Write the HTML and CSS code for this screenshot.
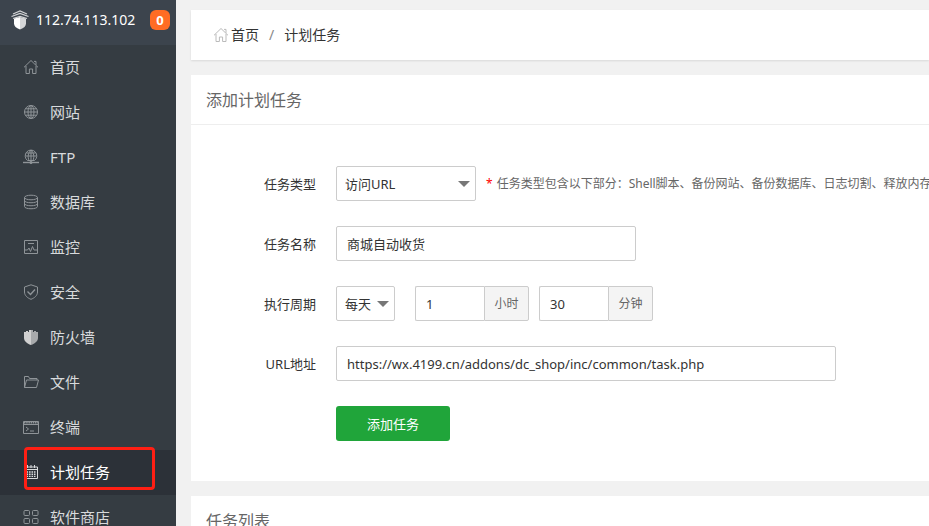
FILE: index.html
```html
<!DOCTYPE html>
<html lang="zh-CN">
<head>
<meta charset="utf-8">
<title>计划任务</title>
<link rel="stylesheet" href="styles.css">
</head>
<body>
<svg class="sprite" aria-hidden="true">
  <symbol id="home" viewBox="0 0 16 16"><path d="M1 8.3 8 1.5l7 6.8M3 7v7.5h3.4V10h3.2v4.5H13V7M11 2.4h2v3.5" /></symbol>
</svg>
<div class="app">
  <aside class="sidebar">
    <header class="host">
      <svg class="host-logo" viewBox="0 0 20 20" aria-hidden="true">
        <path d="M4 8.500 10 7v12.500C6 18 4 16 4 13.500z" fill="#fff"/>
        <path d="M16 8.500 10 7v12.500c4-1.500 6-3.500 6-6z" fill="#d4d6d8"/>
        <path d="M3 4 10 1l7 3M1.500 6.500l8.500-3 8.500 3M3 8.500l7-2 7 2" fill="none" stroke="#d0d2d4" stroke-width="1.300"/>
      </svg>
      <span class="host-ip">112.74.113.102</span>
      <span class="badge">0</span>
    </header>
    <nav>
      <ul class="menu">
        <li><a href="#"><svg class="icon" viewBox="0 0 16 16"><use href="#home"/></svg>首页</a></li>
        <li><a href="#"><svg class="icon" viewBox="0 0 16 16"><circle cx="8" cy="8" r="6.500"/><ellipse cx="8" cy="8" rx="3" ry="6.500"/><path d="M8 1.500v13M1.500 8h13M2.500 4.800h11M2.500 11.200h11"/></svg>网站</a></li>
        <li><a href="#"><svg class="icon" viewBox="0 0 16 16"><path d="M4.500 11.500a5.800 5.800 0 1 1 7 0zM8 1v10.500M2.500 7h11M3.500 4h9M6 11.500C4.500 8 5 4 8 1c3 3 3.500 7 2 10.500"/><path d="M0 13.500h16" stroke-width="1.400"/><circle cx="8" cy="13.500" r="1.200"/></svg>FTP</a></li>
        <li><a href="#"><svg class="icon" viewBox="0 0 16 16"><ellipse cx="8" cy="3.500" rx="6.500" ry="2.300"/><path d="M1.500 3.500v9c0 3 13 3 13 0v-9M1.500 6.500c0 3 13 3 13 0M1.500 9.500c0 3 13 3 13 0"/></svg>数据库</a></li>
        <li><a href="#"><svg class="icon" viewBox="0 0 16 16"><path d="M1.500 1.500h13v13h-13zM1.500 11h3l1.500-2 1.500 3.500 2-5 1.500 3.500h3.500M5 4.500h6"/></svg>监控</a></li>
        <li><a href="#"><svg class="icon" viewBox="0 0 16 16"><path d="M8 .8 14.500 3v5c0 3.500-3 6-6.500 7.300C4.500 14 1.500 11.500 1.500 8V3z"/><path d="m4.500 7.500 3 3 4.500-5" stroke-width="1.400"/></svg>安全</a></li>
        <li><a href="#"><svg class="icon" viewBox="0 0 16 16"><path class="solid-left" d="M1 3h2V2h2v1h1V1h2v15c-4-1.500-7-4-7-7z"/><path class="solid-right" d="M15 3h-2V2h-2v1h-1V1H8v15c4-1.500 7-4 7-7z"/></svg>防火墙</a></li>
        <li><a href="#"><svg class="icon" viewBox="0 0 16 16"><path d="M1.500 13.500v-11h4l1 2h7.500V6M1.500 13.500 3.500 6h12L13.500 13.500z"/></svg>文件</a></li>
        <li><a href="#"><svg class="icon" viewBox="0 0 16 16"><path d="M.5 2.500h15v12H.5zM.5 5.500h15M3 8l2.500 2L3 12M7 12h4"/><path d="M1 3.800h14" stroke-width="1.500" stroke-dasharray="1.500 .7"/></svg>终端</a></li>
        <li class="active"><a href="#"><svg class="icon" viewBox="0 0 16 16"><path d="M1.500 3h13v11.500h-13zM1.500 5.500h13M4.500 1v3M8 1v3M11.500 1v3"/><path d="M3.500 8h9M3.500 10.200h9M3.500 12.400h9" stroke-width="1.400" stroke-dasharray="1.600 .9"/></svg>计划任务</a><span class="marker"></span></li>
        <li><a href="#"><svg class="icon" viewBox="0 0 16 16"><rect x="1" y="1.500" width="5.500" height="5" rx="1"/><rect x="9.500" y="1.500" width="5.500" height="5" rx="1"/><rect x="1" y="9.500" width="5.500" height="5" rx="1"/><rect x="9.500" y="9.500" width="5.500" height="5" rx="1"/></svg>软件商店</a></li>
      </ul>
    </nav>
  </aside>
  <main class="main">
    <nav class="card crumbs">
      <a href="#"><svg class="icon" viewBox="0 0 16 16"><use href="#home"/></svg>首页</a>
      <span class="slash">/</span>
      <a href="#">计划任务</a>
    </nav>
    <section class="card">
      <h2 class="card-title">添加计划任务</h2>
      <form class="form">
        <div class="row">
          <label for="type">任务类型</label>
          <div class="fields">
            <span class="select select-wide"><select id="type"><option>访问URL</option></select></span>
            <p class="hint"><span class="star">*</span>任务类型包含以下部分：Shell脚本、备份网站、备份数据库、日志切割、释放内存</p>
          </div>
        </div>
        <div class="row">
          <label for="name">任务名称</label>
          <div class="fields"><input class="name" id="name" type="text" value="商城自动收货"></div>
        </div>
        <div class="row">
          <label for="cycle">执行周期</label>
          <div class="fields cycle">
            <span class="select"><select id="cycle"><option>每天</option></select></span>
            <span class="group"><input id="hour" type="text" value="1"><label class="unit" for="hour">小时</label></span>
            <span class="group"><input id="minute" type="text" value="30"><label class="unit" for="minute">分钟</label></span>
          </div>
        </div>
        <div class="row">
          <label for="url">URL地址</label>
          <div class="fields"><input class="url" id="url" type="text" value="https://wx.4199.cn/addons/dc_shop/inc/common/task.php"></div>
        </div>
        <div class="row">
          <span></span>
          <div class="fields"><button class="submit" type="button">添加任务</button></div>
        </div>
      </form>
    </section>
    <section class="card">
      <h2 class="card-title">任务列表</h2>
    </section>
  </main>
</div>
</body>
</html>
```
FILE: styles.css
```css
* {
  box-sizing: border-box;
}

body {
  margin: 0;
  background: #f1f1f1;
  color: #333;
  font: 13px/20px "Noto Sans", "Noto Sans CJK SC", sans-serif;
}

a {
  color: inherit;
  text-decoration: none;
}

.sprite {
  display: none;
}

.icon {
  width: 16px;
  height: 16px;
  flex: none;
  fill: none;
  stroke: #8f9498;
  stroke-width: 1;
}

.app {
  display: flex;
  height: 100vh;
  overflow: hidden;
}

.sidebar {
  flex: none;
  width: 176px;
  background: #353c42;
  overflow: hidden;
}

.host {
  display: flex;
  align-items: center;
  height: 45px;
  padding: 0 6px 5px 10px;
  background: #3c444d;
  color: #fff;
  font-size: 14px;
}

.host-logo {
  width: 20px;
  height: 20px;
  margin-right: 6px;
}

.badge {
  width: 20px;
  margin-left: auto;
  border-radius: 6px;
  background: #ff6c23;
  font-size: 13px;
  font-weight: 700;
  text-align: center;
}

.menu {
  margin: 0;
  padding: 0;
  list-style: none;
}

.menu li {
  position: relative;
}

.menu a {
  display: flex;
  align-items: center;
  gap: 11px;
  height: 45px;
  padding: 0 0 2px 23px;
  color: #d8dadc;
  font-size: 15px;
}

.menu .solid-left {
  fill: #d0d0d0;
  stroke: none;
}

.menu .solid-right {
  fill: #a8aaac;
  stroke: none;
}

.menu .active a {
  background: #2c3138;
  color: #fff;
}

.menu .active .icon {
  stroke: #d8dadc;
}

.marker {
  position: absolute;
  top: -3px;
  left: 24px;
  width: 131px;
  height: 43px;
  border: 3px solid #ff1f14;
  border-radius: 4px;
  pointer-events: none;
}

.main {
  flex: 1;
  min-width: 0;
  padding: 10px 0 0 15px;
  overflow: hidden;
}

.card {
  margin-bottom: 15px;
  background: #fff;
}

.crumbs {
  display: flex;
  align-items: center;
  height: 50px;
  padding-left: 22px;
  box-shadow: 0 1px 2px rgba(0, 0, 0, 0.1);
  font-size: 14px;
}

.crumbs a {
  display: flex;
  align-items: center;
  gap: 2px;
}

.crumbs .icon {
  stroke: #bbb;
}

.slash {
  margin: 0 10px;
  color: #888;
}

.card-title {
  height: 50px;
  margin: 0;
  padding-left: 15px;
  border-bottom: 1px solid #eee;
  color: #666;
  font-size: 16px;
  font-weight: 400;
  line-height: 50px;
}

.form {
  display: grid;
  gap: 25px;
  padding: 41px 0 40px;
}

.row {
  display: grid;
  grid-template-columns: 125px minmax(0, 1fr);
  gap: 20px;
  align-items: center;
}

.row > label {
  text-align: right;
}

.fields {
  display: flex;
  align-items: center;
  gap: 10px;
}

input,
select {
  height: 35px;
  border: 1px solid #ccc;
  border-radius: 2px;
  background: #fff;
  color: #333;
  font: inherit;
}

input {
  padding: 0 10px;
}

.name {
  width: 300px;
}

.url {
  width: 500px;
}

.select {
  position: relative;
  flex: none;
  width: 59px;
}

.select-wide {
  width: 140px;
}

.select select {
  display: block;
  width: 100%;
  padding: 0 8px;
  appearance: none;
}

.select::after {
  content: "";
  position: absolute;
  top: 15px;
  right: 6px;
  border: 6px solid transparent;
  border-top-color: #777;
  border-bottom: 0;
  pointer-events: none;
}

.hint {
  margin: 0;
  color: #666;
  font-size: 12px;
  white-space: nowrap;
}

.star {
  margin-right: 4px;
  color: #f00;
}

.cycle .select {
  margin-right: 10px;
}

.group {
  display: flex;
}

.group input {
  width: 69px;
  border-right: 0;
  border-radius: 2px 0 0 2px;
}

.unit {
  width: 45px;
  border: 1px solid #ccc;
  border-radius: 0 2px 2px 0;
  background: #f4f4f4;
  color: #666;
  font-size: 12px;
  line-height: 33px;
  text-align: center;
}

.submit {
  width: 114px;
  height: 35px;
  border: 0;
  border-radius: 3px;
  background: #20a53a;
  color: #fff;
  font: inherit;
}
```
